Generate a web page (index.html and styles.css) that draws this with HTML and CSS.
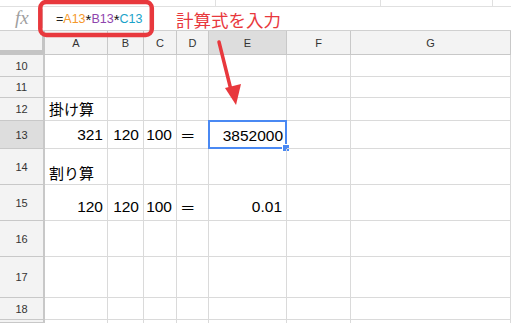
FILE: index.html
```html
<!DOCTYPE html>
<html lang="ja">
<head>
    <meta charset="UTF-8">
    <title>掛け算と割り算</title>
    <link rel="stylesheet" href="styles.css">
</head>
<body>

<div class="top-strip">
    <span class="strip-cell w215"></span>
    <span class="strip-cell w165"></span>
    <span class="strip-cell w112"></span>
</div>

<div class="formula-bar">
    <div class="fx">fx</div>
    <div class="formula">=<span class="ref-a">A13</span><span class="op">*</span><span class="ref-b">B13</span><span class="op">*</span><span class="ref-c">C13</span></div>
    <div class="note">計算式を入力</div>
</div>

<div class="sheet">
    <!-- ヘッダー行 -->
    <div class="corner"></div>
    <div class="col-head">A</div>
    <div class="col-head">B</div>
    <div class="col-head">C</div>
    <div class="col-head">D</div>
    <div class="col-head active">E</div>
    <div class="col-head">F</div>
    <div class="col-head">G</div>

    <div class="row-head">10</div>
    <div class="cell"></div><div class="cell"></div><div class="cell"></div><div class="cell"></div><div class="cell"></div><div class="cell"></div><div class="cell"></div>

    <div class="row-head">11</div>
    <div class="cell"></div><div class="cell"></div><div class="cell"></div><div class="cell"></div><div class="cell"></div><div class="cell"></div><div class="cell"></div>

    <div class="row-head">12</div>
    <div class="cell label">掛け算</div><div class="cell"></div><div class="cell"></div><div class="cell"></div><div class="cell"></div><div class="cell"></div><div class="cell"></div>

    <div class="row-head active">13</div>
    <div class="cell num">321</div>
    <div class="cell num">120</div>
    <div class="cell num">100</div>
    <div class="cell eq">＝</div>
    <div class="cell num selected">3852000<span class="handle"></span></div>
    <div class="cell"></div><div class="cell"></div>

    <div class="row-head">14</div>
    <div class="cell label">割り算</div><div class="cell"></div><div class="cell"></div><div class="cell"></div><div class="cell"></div><div class="cell"></div><div class="cell"></div>

    <div class="row-head">15</div>
    <div class="cell num">120</div>
    <div class="cell num">120</div>
    <div class="cell num">100</div>
    <div class="cell eq">＝</div>
    <div class="cell num">0.01</div>
    <div class="cell"></div><div class="cell"></div>

    <div class="row-head">16</div>
    <div class="cell"></div><div class="cell"></div><div class="cell"></div><div class="cell"></div><div class="cell"></div><div class="cell"></div><div class="cell"></div>

    <div class="row-head">17</div>
    <div class="cell"></div><div class="cell"></div><div class="cell"></div><div class="cell"></div><div class="cell"></div><div class="cell"></div><div class="cell"></div>

    <div class="row-head">18</div>
    <div class="cell"></div><div class="cell"></div><div class="cell"></div><div class="cell"></div><div class="cell"></div><div class="cell"></div><div class="cell"></div>

    <div class="row-head"></div>
    <div class="cell"></div><div class="cell"></div><div class="cell"></div><div class="cell"></div><div class="cell"></div><div class="cell"></div><div class="cell"></div>
</div>

<!-- 赤い注釈（枠と矢印） -->
<svg class="annotation" width="511" height="323" viewBox="0 0 511 323">
    <rect x="40.3" y="2" width="111.5" height="33" rx="6" ry="6" fill="none" stroke="#e8383d" stroke-width="4.5"/>
    <line x1="219" y1="42" x2="231" y2="90" stroke="#e8383d" stroke-width="3.5" stroke-linecap="round"/>
    <polygon points="225,88 241,84 236,105" fill="#e8383d"/>
</svg>

</body>
</html>
```

FILE: styles.css
```css
body {
    margin: 0;
    padding: 0;
    font-family: "Liberation Sans", Arial, "Noto Sans CJK JP", sans-serif;
    background-color: #fff;
    color: #000;
    position: relative;
    width: 511px;
    height: 323px;
    overflow: hidden;
}

/* 上部のツールバーの端 */
.top-strip {
    display: flex;
    height: 7px;
    border-bottom: 1px solid #e0e0e0;
    box-sizing: border-box;
}

.strip-cell {
    border-right: 1px solid #e0e0e0;
    box-sizing: border-box;
}

.w215 { width: 216px; }
.w165 { width: 165px; }
.w112 { width: 112px; }

/* 数式バー */
.formula-bar {
    display: flex;
    align-items: center;
    height: 24px;
    border-bottom: 1px solid #d0d0d0;
    box-sizing: border-box;
}

.fx {
    width: 43px;
    height: 19px;
    box-sizing: border-box;
    padding-left: 15px;
    font-family: "Liberation Serif", "Times New Roman", serif;
    font-style: italic;
    font-size: 19px;
    line-height: 17px;
    color: #a0a0a0;
    border-right: 1px solid #d8d8d8;
}

.formula {
    margin-left: 13px;
    font-size: 12.5px;
    color: #222;
    width: 108px;
    white-space: nowrap;
}

.op {
    font-size: 15px;
    line-height: 12px;
    color: #111;
    vertical-align: -2px;
}

.ref-a { color: #f5982a; }
.ref-b { color: #8e44ad; }
.ref-c { color: #1aa3c9; }

.note {
    font-family: "Noto Sans CJK JP", sans-serif;
    font-size: 17.5px;
    color: #e8383d;
    margin-left: 12px;
    line-height: 20px;
    margin-top: 2px;
}

/* シート */
.sheet {
    display: grid;
    grid-template-columns: 45px 63px 36px 33px 32px 78px 64px 1fr;
    grid-template-rows: 24px 22px 21px 23px 28px 36px 36px 36px 41px 22px 3px;
}

.corner {
    background-color: #f3f3f3;
    border-right: 4px solid #c4c4c4;
    border-bottom: 5px solid #c4c4c4;
    margin-right: -1px;
}

.col-head {
    background-color: #f3f3f3;
    border-right: 1px solid #c8c8c8;
    border-bottom: 1px solid #c8c8c8;
    font-size: 11px;
    color: #333;
    display: flex;
    align-items: center;
    justify-content: center;
}

.row-head {
    background-color: #f3f3f3;
    border-right: 2px solid #c8c8c8;
    border-bottom: 1px solid #c8c8c8;
    font-size: 11px;
    color: #333;
    display: flex;
    align-items: center;
    justify-content: center;
}

.col-head.active, .row-head.active {
    background-color: #dddddd;
}

.cell {
    border-right: 1px solid #dadada;
    border-bottom: 1px solid #dadada;
    display: flex;
    align-items: flex-end;
    padding: 0 4px 4px 4px;
    font-size: 15.5px;
    line-height: 18px;
    position: relative;
}

.cell, .row-head, .col-head, .corner {
    box-sizing: border-box;
}

.label {
    font-family: "Noto Sans CJK JP", sans-serif;
    font-size: 15px;
    padding-left: 4px;
    padding-bottom: 2px;
    white-space: nowrap;
}

.num {
    justify-content: flex-end;
}

.eq {
    font-family: "Noto Sans CJK JP", sans-serif;
    padding-left: 3px;
}

.selected {
    border: 2px solid #4a89f3;
    margin-left: -1px;
    margin-top: -1px;
    padding-right: 2px;
    padding-bottom: 2px;
}

.handle {
    position: absolute;
    right: -5px;
    bottom: -5px;
    width: 6px;
    height: 6px;
    background-color: #4a89f3;
    border: 1px solid #fff;
}

.annotation {
    position: absolute;
    top: 0;
    left: 0;
    pointer-events: none;
}
```
